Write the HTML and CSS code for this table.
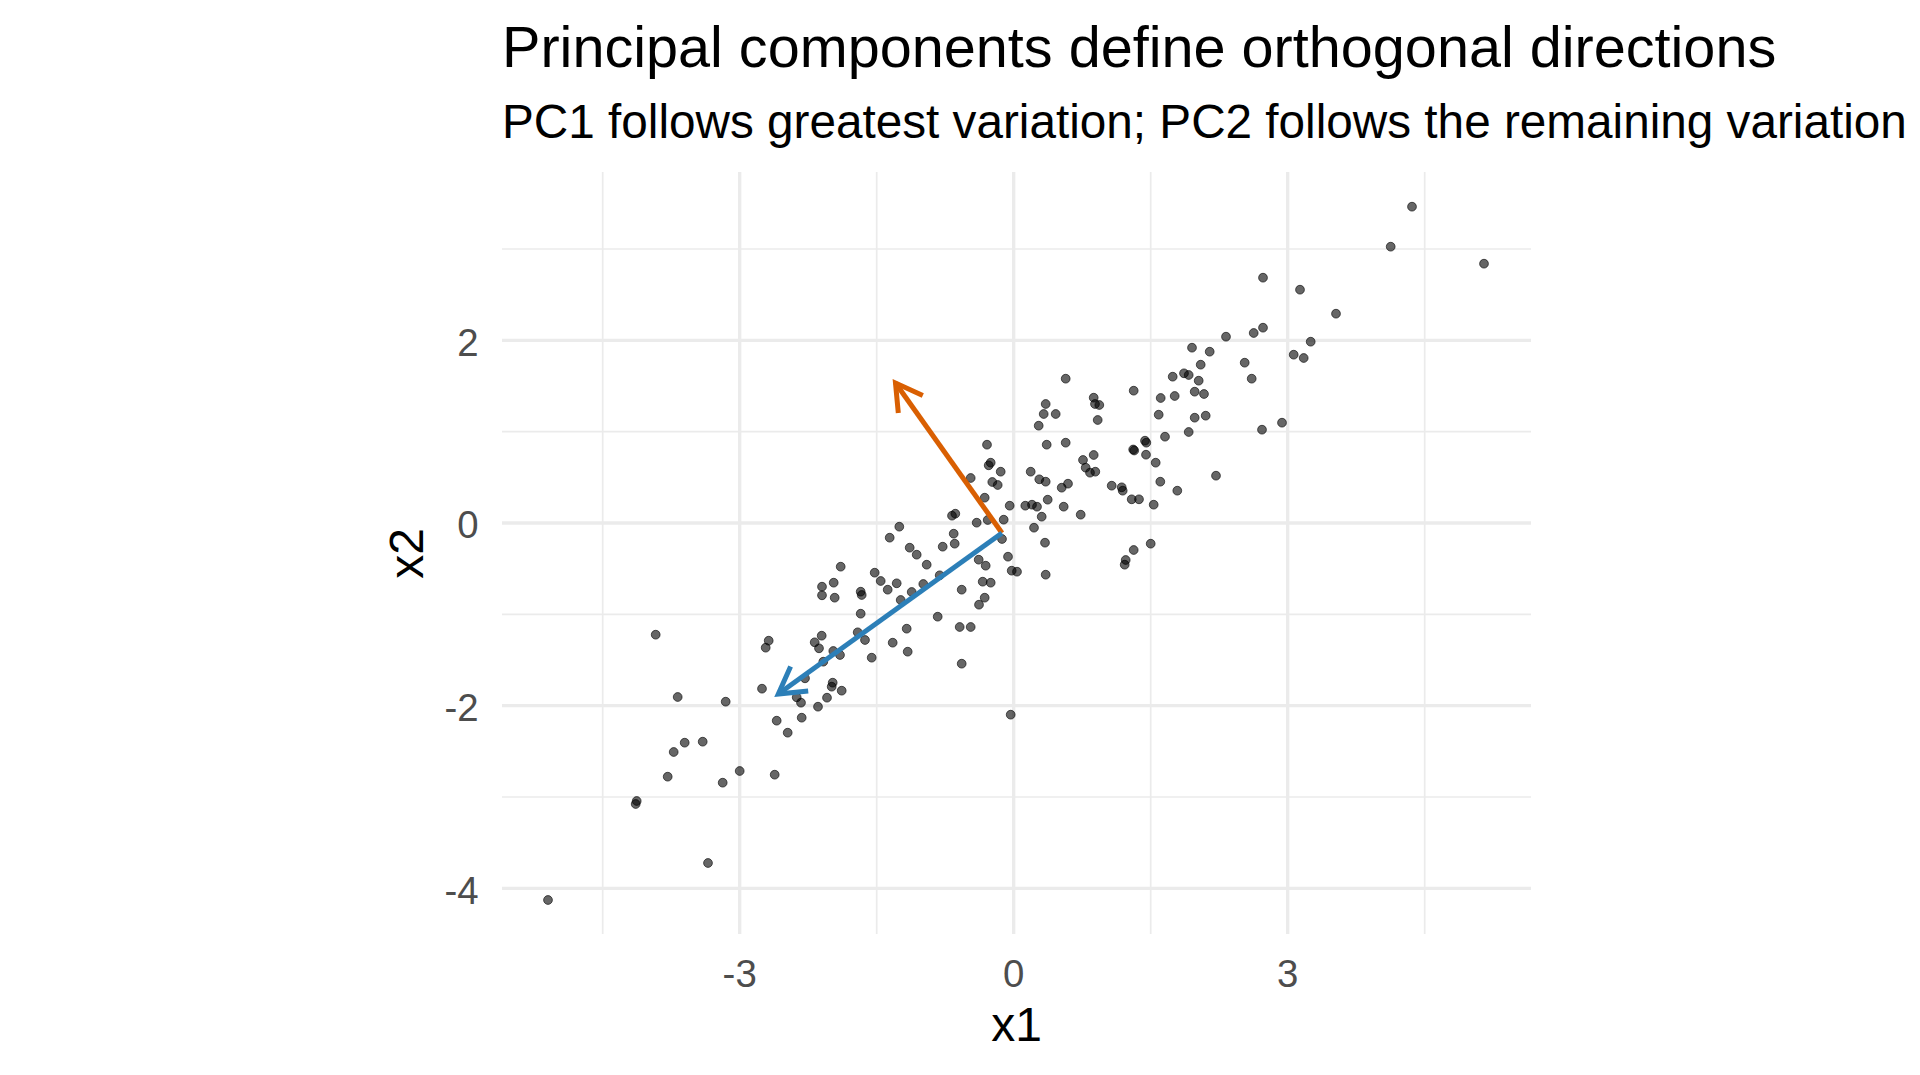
FILE: index.html
```html
<!DOCTYPE html>
<html lang="en">
<head>
<meta charset="utf-8">
<title>Principal components define orthogonal directions</title>
<link rel="stylesheet" href="styles.css">
</head>
<body>
<div class="plot">
  <header class="head">
    <h1 class="title">Principal components define orthogonal directions</h1>
    <p class="subtitle">PC1 follows greatest variation; PC2 follows the remaining variation</p>
  </header>
  <div class="body">
    <div class="ytitle"><span>x2</span></div>
    <div class="yaxis">
      <span class="ylab" style="top:168.3px">2</span>
      <span class="ylab" style="top:351px">0</span>
      <span class="ylab" style="top:533.7px">-2</span>
      <span class="ylab" style="top:716.3px">-4</span>
    </div>
    <svg class="panel" width="1029" height="762" viewBox="0 0 1029 762">
      <g class="grid-minor">
        <line x1="100.7" y1="0" x2="100.7" y2="762"/>
        <line x1="374.7" y1="0" x2="374.7" y2="762"/>
        <line x1="648.7" y1="0" x2="648.7" y2="762"/>
        <line x1="922.7" y1="0" x2="922.7" y2="762"/>
        <line x1="0" y1="77" x2="1029" y2="77"/>
        <line x1="0" y1="259.7" x2="1029" y2="259.7"/>
        <line x1="0" y1="442.3" x2="1029" y2="442.3"/>
        <line x1="0" y1="625" x2="1029" y2="625"/>
      </g>
      <g class="grid-major">
        <line x1="237.7" y1="0" x2="237.7" y2="762"/>
        <line x1="511.7" y1="0" x2="511.7" y2="762"/>
        <line x1="785.7" y1="0" x2="785.7" y2="762"/>
        <line x1="0" y1="168.3" x2="1029" y2="168.3"/>
        <line x1="0" y1="351" x2="1029" y2="351"/>
        <line x1="0" y1="533.7" x2="1029" y2="533.7"/>
        <line x1="0" y1="716.3" x2="1029" y2="716.3"/>
      </g>
      <g class="pts">
        <circle cx="153.7" cy="462.7" r="4.4"/>
        <circle cx="175.7" cy="525" r="4.4"/>
        <circle cx="223.7" cy="529.7" r="4.4"/>
        <circle cx="182.7" cy="570.7" r="4.4"/>
        <circle cx="171.7" cy="580" r="4.4"/>
        <circle cx="200.7" cy="569.7" r="4.4"/>
        <circle cx="165.7" cy="604.7" r="4.4"/>
        <circle cx="220.7" cy="610.7" r="4.4"/>
        <circle cx="237.7" cy="599" r="4.4"/>
        <circle cx="272.7" cy="602.7" r="4.4"/>
        <circle cx="134.7" cy="629" r="4.4"/>
        <circle cx="133.7" cy="632" r="4.4"/>
        <circle cx="206" cy="691" r="4.4"/>
        <circle cx="46" cy="728" r="4.4"/>
        <circle cx="263.7" cy="475.7" r="4.4"/>
        <circle cx="266.7" cy="468.7" r="4.4"/>
        <circle cx="260" cy="516.7" r="4.4"/>
        <circle cx="274.7" cy="548.7" r="4.4"/>
        <circle cx="285.7" cy="560.7" r="4.4"/>
        <circle cx="299.7" cy="545.7" r="4.4"/>
        <circle cx="316" cy="534.7" r="4.4"/>
        <circle cx="325" cy="525.7" r="4.4"/>
        <circle cx="299" cy="530.7" r="4.4"/>
        <circle cx="294.7" cy="525.3" r="4.4"/>
        <circle cx="303" cy="506.3" r="4.4"/>
        <circle cx="339.7" cy="518.7" r="4.4"/>
        <circle cx="330.7" cy="510.7" r="4.4"/>
        <circle cx="329.7" cy="514.7" r="4.4"/>
        <circle cx="319.7" cy="463.7" r="4.4"/>
        <circle cx="312.7" cy="470.3" r="4.4"/>
        <circle cx="317" cy="476.3" r="4.4"/>
        <circle cx="331.3" cy="479" r="4.4"/>
        <circle cx="338" cy="483" r="4.4"/>
        <circle cx="321.3" cy="489.7" r="4.4"/>
        <circle cx="358.7" cy="441.7" r="4.4"/>
        <circle cx="355.7" cy="460.3" r="4.4"/>
        <circle cx="363" cy="468" r="4.4"/>
        <circle cx="369.7" cy="485.7" r="4.4"/>
        <circle cx="390.7" cy="470.7" r="4.4"/>
        <circle cx="404.7" cy="456.7" r="4.4"/>
        <circle cx="405.7" cy="479.7" r="4.4"/>
        <circle cx="543.7" cy="232" r="4.4"/>
        <circle cx="541.7" cy="242" r="4.4"/>
        <circle cx="553.7" cy="242" r="4.4"/>
        <circle cx="536.7" cy="253.7" r="4.4"/>
        <circle cx="544.7" cy="272.7" r="4.4"/>
        <circle cx="563.7" cy="270.7" r="4.4"/>
        <circle cx="593" cy="232" r="4.4"/>
        <circle cx="597.3" cy="233" r="4.4"/>
        <circle cx="595.7" cy="248" r="4.4"/>
        <circle cx="656.7" cy="242.7" r="4.4"/>
        <circle cx="658.7" cy="226" r="4.4"/>
        <circle cx="692.7" cy="245.7" r="4.4"/>
        <circle cx="703.7" cy="243.7" r="4.4"/>
        <circle cx="686.7" cy="260" r="4.4"/>
        <circle cx="663" cy="264.7" r="4.4"/>
        <circle cx="643" cy="268.7" r="4.4"/>
        <circle cx="644.3" cy="270.7" r="4.4"/>
        <circle cx="631.2" cy="277.5" r="4.4"/>
        <circle cx="632.2" cy="278.5" r="4.4"/>
        <circle cx="644" cy="282.7" r="4.4"/>
        <circle cx="653.7" cy="290.7" r="4.4"/>
        <circle cx="658.3" cy="309.7" r="4.4"/>
        <circle cx="675.3" cy="318.7" r="4.4"/>
        <circle cx="714" cy="303.7" r="4.4"/>
        <circle cx="591.7" cy="283" r="4.4"/>
        <circle cx="581" cy="288" r="4.4"/>
        <circle cx="583.7" cy="295.7" r="4.4"/>
        <circle cx="588" cy="300.7" r="4.4"/>
        <circle cx="593.3" cy="299.7" r="4.4"/>
        <circle cx="609.7" cy="313.7" r="4.4"/>
        <circle cx="619.7" cy="315.3" r="4.4"/>
        <circle cx="620.7" cy="318.7" r="4.4"/>
        <circle cx="629.7" cy="327.3" r="4.4"/>
        <circle cx="637" cy="327.3" r="4.4"/>
        <circle cx="651.7" cy="332.7" r="4.4"/>
        <circle cx="648.7" cy="371.7" r="4.4"/>
        <circle cx="631.7" cy="378" r="4.4"/>
        <circle cx="623.7" cy="388" r="4.4"/>
        <circle cx="622.7" cy="392.7" r="4.4"/>
        <circle cx="528.7" cy="299.7" r="4.4"/>
        <circle cx="537.3" cy="307.3" r="4.4"/>
        <circle cx="543.7" cy="309.7" r="4.4"/>
        <circle cx="559.7" cy="315.7" r="4.4"/>
        <circle cx="566" cy="311.7" r="4.4"/>
        <circle cx="545.7" cy="327.7" r="4.4"/>
        <circle cx="561.7" cy="334.7" r="4.4"/>
        <circle cx="578.7" cy="342.7" r="4.4"/>
        <circle cx="523.3" cy="333.7" r="4.4"/>
        <circle cx="530" cy="332.7" r="4.4"/>
        <circle cx="535" cy="334.7" r="4.4"/>
        <circle cx="539.7" cy="344.7" r="4.4"/>
        <circle cx="532" cy="355.7" r="4.4"/>
        <circle cx="543" cy="370.7" r="4.4"/>
        <circle cx="543.7" cy="402.7" r="4.4"/>
        <circle cx="507.7" cy="333.7" r="4.4"/>
        <circle cx="501.7" cy="347.7" r="4.4"/>
        <circle cx="500" cy="367" r="4.4"/>
        <circle cx="506" cy="384.7" r="4.4"/>
        <circle cx="509.7" cy="398.7" r="4.4"/>
        <circle cx="515" cy="399.7" r="4.4"/>
        <circle cx="508.7" cy="542.7" r="4.4"/>
        <circle cx="485" cy="272.7" r="4.4"/>
        <circle cx="488.7" cy="290.7" r="4.4"/>
        <circle cx="486.7" cy="293.3" r="4.4"/>
        <circle cx="498.7" cy="299.7" r="4.4"/>
        <circle cx="490.3" cy="310" r="4.4"/>
        <circle cx="495.7" cy="313" r="4.4"/>
        <circle cx="468.7" cy="306" r="4.4"/>
        <circle cx="482.7" cy="325.7" r="4.4"/>
        <circle cx="485.7" cy="348" r="4.4"/>
        <circle cx="474.7" cy="350.7" r="4.4"/>
        <circle cx="453.3" cy="341.7" r="4.4"/>
        <circle cx="450" cy="343.7" r="4.4"/>
        <circle cx="451.7" cy="361.7" r="4.4"/>
        <circle cx="452.7" cy="371.7" r="4.4"/>
        <circle cx="440.7" cy="374.7" r="4.4"/>
        <circle cx="476.7" cy="387.7" r="4.4"/>
        <circle cx="483.7" cy="393.7" r="4.4"/>
        <circle cx="480.7" cy="409.7" r="4.4"/>
        <circle cx="488.7" cy="410.7" r="4.4"/>
        <circle cx="482.7" cy="425.7" r="4.4"/>
        <circle cx="477" cy="432.7" r="4.4"/>
        <circle cx="459.7" cy="417.7" r="4.4"/>
        <circle cx="437.7" cy="403.3" r="4.4"/>
        <circle cx="421.3" cy="412" r="4.4"/>
        <circle cx="457.7" cy="455" r="4.4"/>
        <circle cx="468.7" cy="455" r="4.4"/>
        <circle cx="435.7" cy="444.7" r="4.4"/>
        <circle cx="459.7" cy="491.7" r="4.4"/>
        <circle cx="397.3" cy="354.7" r="4.4"/>
        <circle cx="387.7" cy="365.7" r="4.4"/>
        <circle cx="407.7" cy="375.7" r="4.4"/>
        <circle cx="414.7" cy="382.7" r="4.4"/>
        <circle cx="424.7" cy="392.7" r="4.4"/>
        <circle cx="372.7" cy="400.7" r="4.4"/>
        <circle cx="378.7" cy="409" r="4.4"/>
        <circle cx="394.7" cy="411.3" r="4.4"/>
        <circle cx="385.7" cy="417.7" r="4.4"/>
        <circle cx="409.7" cy="420" r="4.4"/>
        <circle cx="398.7" cy="428" r="4.4"/>
        <circle cx="358.7" cy="419.7" r="4.4"/>
        <circle cx="359.7" cy="423" r="4.4"/>
        <circle cx="338.7" cy="394.7" r="4.4"/>
        <circle cx="331.7" cy="410.7" r="4.4"/>
        <circle cx="332.7" cy="425.7" r="4.4"/>
        <circle cx="320" cy="414.7" r="4.4"/>
        <circle cx="320" cy="423.3" r="4.4"/>
        <circle cx="563.7" cy="206.7" r="4.4"/>
        <circle cx="631.7" cy="218.7" r="4.4"/>
        <circle cx="672.7" cy="224" r="4.4"/>
        <circle cx="670.7" cy="204.7" r="4.4"/>
        <circle cx="682" cy="201.3" r="4.4"/>
        <circle cx="686.7" cy="203" r="4.4"/>
        <circle cx="690" cy="175.7" r="4.4"/>
        <circle cx="707.7" cy="179.7" r="4.4"/>
        <circle cx="698.7" cy="192.7" r="4.4"/>
        <circle cx="696.7" cy="208.7" r="4.4"/>
        <circle cx="692.7" cy="219.7" r="4.4"/>
        <circle cx="702" cy="222" r="4.4"/>
        <circle cx="591.7" cy="225.7" r="4.4"/>
        <circle cx="910" cy="34.7" r="4.4"/>
        <circle cx="888.7" cy="74.7" r="4.4"/>
        <circle cx="982" cy="91.7" r="4.4"/>
        <circle cx="761" cy="105.7" r="4.4"/>
        <circle cx="798" cy="117.7" r="4.4"/>
        <circle cx="834" cy="141.7" r="4.4"/>
        <circle cx="808.7" cy="169.7" r="4.4"/>
        <circle cx="791.7" cy="182.7" r="4.4"/>
        <circle cx="801.7" cy="186" r="4.4"/>
        <circle cx="761" cy="155.7" r="4.4"/>
        <circle cx="751.7" cy="161" r="4.4"/>
        <circle cx="724" cy="164.7" r="4.4"/>
        <circle cx="742.7" cy="190.7" r="4.4"/>
        <circle cx="749.7" cy="206.7" r="4.4"/>
        <circle cx="760" cy="257.7" r="4.4"/>
        <circle cx="780" cy="250.7" r="4.4"/>
      </g>
      <g class="arrow pc2">
        <line x1="500" y1="361" x2="393.5" y2="211"/>
        <polyline points="396.3,240.9 393.5,211 420.8,223.5"/>
      </g>
      <g class="arrow pc1">
        <line x1="500" y1="361" x2="276.3" y2="522"/>
        <polyline points="306.2,519 276.3,522 288.6,494.6"/>
      </g>
    </svg>
  </div>
  <div class="xaxis">
    <span class="xlab" style="left:237.7px">-3</span>
    <span class="xlab" style="left:511.7px">0</span>
    <span class="xlab" style="left:785.7px">3</span>
  </div>
  <div class="xtitle">x1</div>
</div>
</body>
</html>
```

FILE: styles.css
```css
html, body {
  margin: 0;
  padding: 0;
  background: #ffffff;
}

body {
  width: 1920px;
  height: 1075px;
  overflow: hidden;
  font-family: "Liberation Sans", Arial, sans-serif;
  color: #000000;
}

.plot {
  display: flex;
  flex-direction: column;
  padding-top: 19px;
}

.head {
  padding-left: 502px;
}

.title {
  margin: 0 0 21px 0;
  font-size: 57.6px;
  font-weight: normal;
  line-height: 1;
  white-space: nowrap;
}

.subtitle {
  margin: 0 0 26.6px 0;
  font-size: 47.7px;
  line-height: 1;
  white-space: nowrap;
}

.body {
  display: flex;
  height: 762px;
}

.ytitle {
  width: 431.3px;
  display: flex;
  justify-content: flex-end;
  align-items: center;
}

.ytitle span {
  writing-mode: vertical-rl;
  transform: rotate(180deg);
  font-size: 48px;
  line-height: 1;
}

.yaxis {
  position: relative;
  width: 70.7px;
}

.ylab {
  position: absolute;
  right: 23.3px;
  margin-top: 2.4px;
  transform: translateY(-50%);
  font-size: 38.4px;
  line-height: 1;
  color: #4d4d4d;
}

.panel {
  display: block;
  flex: none;
}

.grid-minor line {
  stroke: #ebebeb;
  stroke-width: 1.7;
}

.grid-major line {
  stroke: #ebebeb;
  stroke-width: 3.3;
}

.pts circle {
  fill: #000000;
  fill-opacity: 0.6;
  stroke: #000000;
  stroke-opacity: 0.6;
  stroke-width: 1;
}

.arrow line,
.arrow polyline {
  fill: none;
  stroke-width: 5;
  stroke-linecap: butt;
  stroke-linejoin: miter;
}

.pc2 line,
.pc2 polyline {
  stroke: #d95f02;
}

.pc1 line,
.pc1 polyline {
  stroke: #2c7fb8;
}

.xaxis {
  position: relative;
  margin-left: 502px;
  width: 1029px;
  height: 67px;
}

.xlab {
  position: absolute;
  top: 21px;
  transform: translateX(-50%);
  font-size: 38.4px;
  line-height: 1;
  color: #4d4d4d;
}

.xtitle {
  margin-left: 502px;
  width: 1029px;
  text-align: center;
  font-size: 48px;
  line-height: 1;
}
```
